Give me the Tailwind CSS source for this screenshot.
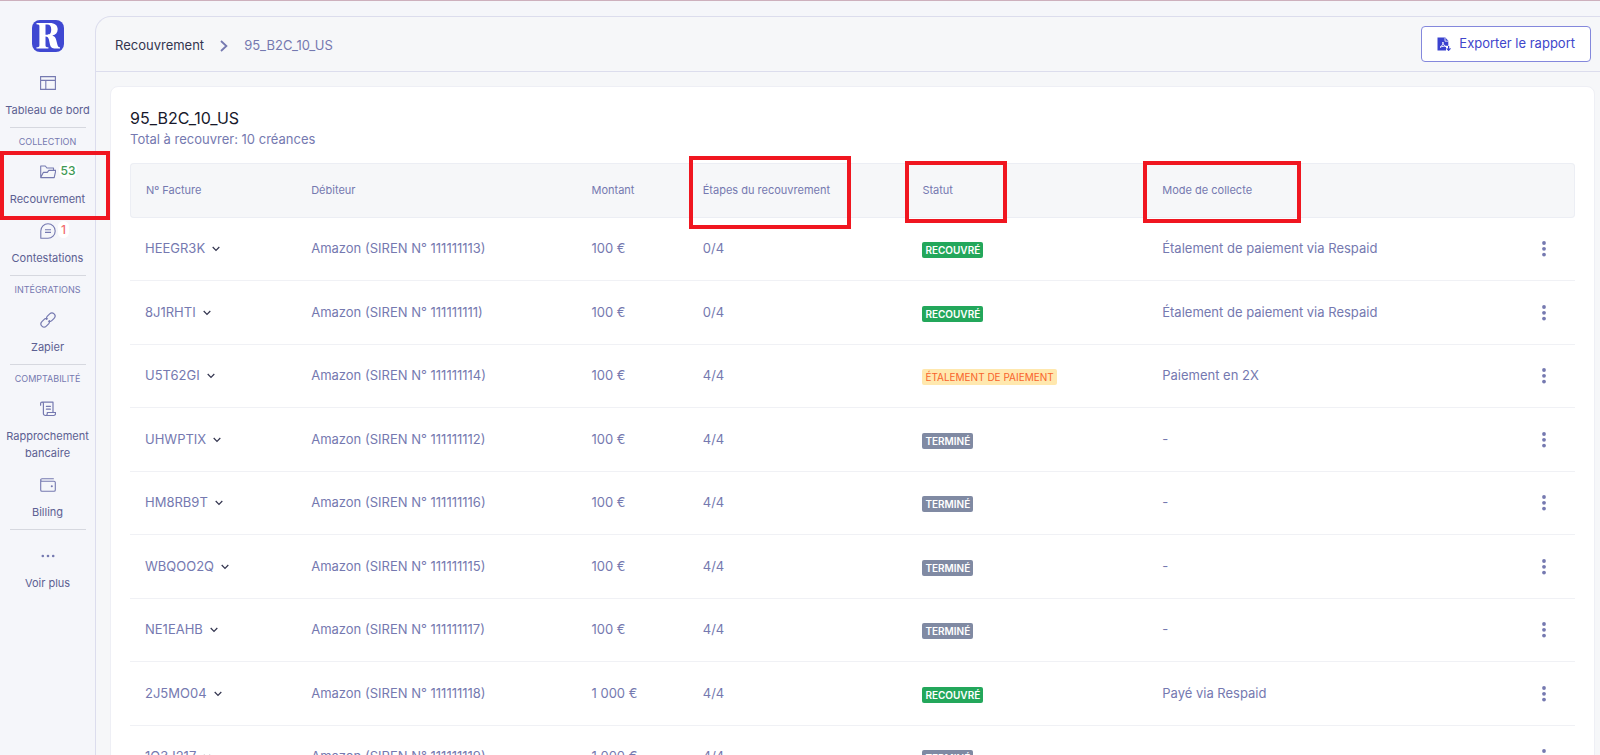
<!DOCTYPE html>
<html lang="fr">
<head>
<meta charset="utf-8">
<meta name="viewport" content="width=device-width, initial-scale=1">
<title>Recouvrement – 95_B2C_10_US</title>
<script src="https://cdn.jsdelivr.net/npm/@tailwindcss/browser@4"></script>
</head>
<body class="flex h-screen overflow-hidden border-t border-[#cdb0bd] bg-[#f5f6fa] font-['Inter','Noto_Sans',sans-serif] text-[13px] text-[#7579b0]">

<svg class="hidden" aria-hidden="true">
  <symbol id="chevron" viewBox="0 0 8 6"><path d="M.7 1 4 4.5 7.3 1" fill="none" stroke="currentColor" stroke-width="1.2"/></symbol>
  <symbol id="dots" viewBox="0 0 4 16"><circle cx="2" cy="2" r="1.9"/><circle cx="2" cy="7.8" r="1.9"/><circle cx="2" cy="13.6" r="1.9"/></symbol>
</svg>

<nav class="relative w-[95px] shrink-0 pt-[19px] text-center text-[11px] leading-[17px] text-[#5c6092]">
  <a href="#" aria-label="Accueil" class="mx-auto block size-8 rounded-lg bg-[#3f48d2] p-0.5">
    <svg class="size-7" viewBox="0 0 28 28" fill="#fff" fill-rule="evenodd"><path d="M2.5 1h13.2c5.2 0 8 2.300 8 6.300 0 3.400-2 5.600-5.400 6.300 2.300.7 3.200 2 3.900 4.400l1.300 4.900c.5 1.700 1.100 2.200 2.500 2.300V26.500h-4.400c-3.700 0-5-1-5.700-4.200l-1-4.700c-.6-2.500-1.300-3.200-3.400-3.200v8.800c0 1.600.5 2 2.900 2.100v1.200H2.500v-1.200c2.400-.1 2.900-.5 2.900-2.100V4.300c0-1.600-.5-2-2.900-2.100zM11.500 2.600v10.200h1.700c2.900 0 4-1.600 4-5.200 0-3.500-1.200-5-4-5z"/></svg>
  </a>

  <a href="#" class="mt-[23px] block">
    <svg class="mx-auto size-4" viewBox="0 0 16 16" fill="none" stroke="#7579b0" stroke-width="1.1"><path d="M.6 1.600h14.800v12.800H.6zM.6 5.400h14.800M5.800 5.400v9"/></svg>
    <span class="mt-[11px] block whitespace-nowrap">Tableau de bord</span>
  </a>
  <hr class="mx-auto mt-2 w-[76px] border-[#d6d8df]">
  <h2 class="mt-[7px] text-[9px] leading-[14px] text-[#7579b0]">COLLECTION</h2>

  <a href="#" class="relative mt-[15px] block">
    <svg class="mx-auto size-4" viewBox="0 0 16 16" fill="none" stroke="#7579b0" stroke-width="1.1" stroke-linejoin="round"><path d="M.7 13.600V2h4.600l1.600 2h6.600v2.400M.7 13.600l2.600-5.200h4l1.500-2h7l-1.600 7.200z"/></svg>
    <span class="absolute -top-0.5 left-[59px] flex h-[17px] w-[18px] items-center justify-center rounded-lg bg-white text-xs font-medium text-[#3f9a55]">53</span>
    <span class="mt-[11px] block">Recouvrement</span>
    <span class="absolute -top-[13px] left-0 z-10 h-[69px] w-[110px] border-4 border-[#f01620]"></span>
  </a>
  <a href="#" class="relative mt-[15px] block">
    <svg class="mx-auto size-4" viewBox="0 0 16 16" fill="none" stroke="#7579b0" stroke-width="1.1" stroke-linejoin="round"><path d="M.8 15.200V8A7.200 7.200 0 1 1 8 15.200zM5 6.800h6M5 9.400h6"/></svg>
    <span class="absolute -top-0.5 left-[58px] flex h-[17px] w-[11px] items-center justify-center rounded-md bg-white text-xs font-medium text-[#f26d6d]">1</span>
    <span class="mt-[11px] block">Contestations</span>
  </a>
  <hr class="mx-auto mt-2 w-[76px] border-[#d6d8df]">
  <h2 class="mt-[7px] text-[9px] leading-[14px] text-[#7579b0]">INTÉGRATIONS</h2>

  <a href="#" class="mt-[15px] block">
    <svg class="mx-auto size-4" viewBox="0 0 16 16" fill="none" stroke="#7579b0" stroke-width="1.2" stroke-linecap="round"><path d="M6.600 7.400a3.400 3.400 0 0 1 .8-3.200l2.300-2.300a3.100 3.100 0 0 1 4.400 4.400l-2.300 2.300a3.100 3.100 0 0 1-3.300.7M9.400 8.600a3.400 3.400 0 0 1-.8 3.200l-2.300 2.300a3.100 3.100 0 0 1-4.400-4.400l2.300-2.300a3.100 3.100 0 0 1 3.300-.7"/></svg>
    <span class="mt-[11px] block">Zapier</span>
  </a>
  <hr class="mx-auto mt-2 w-[76px] border-[#d6d8df]">
  <h2 class="mt-[7px] text-[9px] leading-[14px] text-[#7579b0]">COMPTABILITÉ</h2>

  <a href="#" class="mt-[15px] block">
    <svg class="mx-auto size-4" viewBox="0 0 16 16" fill="none" stroke="#7579b0" stroke-width="1.2" stroke-linejoin="round" stroke-linecap="round"><path d="M.6 4.200V2.600a1.400 1.400 0 0 1 2.800 0v9.800a2 2 0 0 0 2 2.100M2 1.200h11v10M5.400 14.500h8.400a1.800 1.800 0 0 0 1.700-1.800v-1.200H7.300v1.200a1.900 1.900 0 0 1-1.900 1.800zM6.400 5.400h4M6.400 8.200h4"/></svg>
    <span class="mt-[11px] block">Rapprochement bancaire</span>
  </a>
  <a href="#" class="mt-[15px] block">
    <svg class="mx-auto size-4" viewBox="0 0 16 16" fill="none" stroke="#7579b0" stroke-width="1.1" stroke-linejoin="round" stroke-linecap="round"><path d="M13.400 1.700H2A1.300 1.300 0 0 0 .7 3v9.900a1.300 1.300 0 0 0 1.300 1.300h12a1.300 1.300 0 0 0 1.300-1.300V5.600A1.300 1.300 0 0 0 14 4.300H2A1.300 1.300 0 0 1 .7 3"/><circle cx="11.8" cy="9.2" r=".5"/></svg>
    <span class="mt-[11px] block">Billing</span>
  </a>
  <hr class="mx-auto mt-2 w-[76px] border-[#d6d8df]">
  <button type="button" class="mt-[18px] w-full">
    <svg class="mx-auto size-4" viewBox="0 0 16 16" fill="#7579b0"><circle cx="2.8" cy="8" r="1.3"/><circle cx="8" cy="8" r="1.3"/><circle cx="13.2" cy="8" r="1.3"/></svg>
    <span class="mt-[11px] block">Voir plus</span>
  </button>
</nav>

<main class="mt-[15px] min-w-0 flex-1 rounded-tl-2xl border-t border-l border-[#dcdded] bg-[#f6f7f9]">
  <header class="flex h-[55px] items-center justify-between border-b border-[#dcdded] pr-[9px] pl-[19px]">
    <div class="flex items-center pt-1">
      <a href="#" class="text-[#33354f]">Recouvrement</a>
      <svg class="mx-4 h-3 w-2" viewBox="0 0 8 12" fill="none" stroke="currentColor" stroke-width="1.8"><path d="M1 1l5.400 5L1 11"/></svg>
      <span>95_B2C_10_US</span>
    </div>
    <button type="button" class="flex h-9 items-center gap-2 rounded border border-[#8488dc] bg-white px-[15px] text-[#4046cb]">
      <svg class="size-[14px]" viewBox="0 0 14 14"><path d="M.5.500h7.800l3 3.200v5.100H9v4.700H.5z" fill="#3a42cf"/><path d="M8 .8v3.400h3.300" fill="none" stroke="#fff" stroke-width=".8"/><path d="M3 10.300c2.400-1.400 3-3.400 2.900-5.300.3 2.400 1.300 4 3.300 4.500-2-.5-4.100-.2-6.200.8z" fill="none" stroke="#fff" stroke-width=".9"/><path d="M11.600 9v4M9.700 11.300l1.900 2 1.900-2" fill="none" stroke="#3a42cf" stroke-width="1.2"/></svg>
      Exporter le rapport
    </button>
  </header>

  <section class="mt-[14px] mr-[5px] ml-[14px] rounded-lg border border-[#eeeff5] bg-white px-[19px] pt-5 pb-8">
    <h1 class="text-base leading-[22px] text-[#17182b]">95_B2C_10_US</h1>
    <p class="leading-5">Total à recouvrer: 10 créances</p>
    <table class="mt-[14px] w-full table-fixed border-separate border-spacing-0 text-left whitespace-nowrap">
      <colgroup>
        <col class="w-[11.5%]"><col class="w-[19.4%]"><col class="w-[7.7%]"><col class="w-[15.2%]"><col class="w-[16.6%]"><col><col class="w-[56px]">
      </colgroup>
      <thead>
        <tr class="h-[55px] bg-[#f6f7f9] text-[11px] *:border-y *:border-[#eceef4] *:px-[15px] *:font-normal">
          <th scope="col" class="rounded-l border-l">Nº Facture</th>
          <th scope="col">Débiteur</th>
          <th scope="col">Montant</th>
          <th scope="col" class="relative">Étapes du recouvrement<span class="absolute -top-2 left-px h-[73px] w-[162px] border-4 border-[#f01620]"></span></th>
          <th scope="col" class="relative">Statut<span class="absolute -top-[3px] -left-0.5 h-[62px] w-[102px] border-4 border-[#f01620]"></span></th>
          <th scope="col" class="relative">Mode de collecte<span class="absolute -top-[3px] -left-1 h-[62px] w-[158px] border-4 border-[#f01620]"></span></th>
          <th scope="col" class="rounded-r border-r" aria-label="Actions"></th>
        </tr>
      </thead>
      <tbody id="rows"></tbody>
    </table>
  </section>
</main>

<script>
  const badges = {
    'RECOUVRÉ': 'bg-[#23a75b] font-semibold text-white',
    'ÉTALEMENT DE PAIEMENT': 'bg-[#ffe8ae] text-[#f8632c]',
    'TERMINÉ': 'bg-[#808aa3] font-semibold text-white',
  };
  const rows = [
    ['HEEGR3K', '111111113', '100 €', '0/4', 'RECOUVRÉ', 'Étalement de paiement via Respaid'],
    ['8J1RHTI', '111111111', '100 €', '0/4', 'RECOUVRÉ', 'Étalement de paiement via Respaid'],
    ['U5T62GI', '111111114', '100 €', '4/4', 'ÉTALEMENT DE PAIEMENT', 'Paiement en 2X'],
    ['UHWPTIX', '111111112', '100 €', '4/4', 'TERMINÉ', '-'],
    ['HM8RB9T', '111111116', '100 €', '4/4', 'TERMINÉ', '-'],
    ['WBQOO2Q', '111111115', '100 €', '4/4', 'TERMINÉ', '-'],
    ['NE1EAHB', '111111117', '100 €', '4/4', 'TERMINÉ', '-'],
    ['2J5MO04', '111111118', '1 000 €', '4/4', 'RECOUVRÉ', 'Payé via Respaid'],
    ['1O3J217', '111111119', '1 000 €', '4/4', 'TERMINÉ', '-'],
  ];
  document.getElementById('rows').innerHTML = rows.map(([id, siren, amount, step, status, mode]) => `
    <tr class="odd:h-[63px] even:h-[64px] *:border-b *:border-[#f0f1f5] *:px-[15px]">
      <td><button type="button" class="flex items-center gap-[7px]">${id}<svg class="h-1.5 w-2 text-[#33354f]"><use href="#chevron"/></svg></button></td>
      <td>Amazon (SIREN N° ${siren})</td>
      <td>${amount}</td>
      <td>${step}</td>
      <td><span class="mt-1 inline-block rounded-xs px-[3px] text-[10px] leading-4 ${badges[status]}">${status}</span></td>
      <td>${mode}</td>
      <td><button type="button" aria-label="Actions" class="ml-2 block"><svg class="h-4 w-1 fill-[#7579b0]"><use href="#dots"/></svg></button></td>
    </tr>`).join('');
</script>
</body>
</html>
